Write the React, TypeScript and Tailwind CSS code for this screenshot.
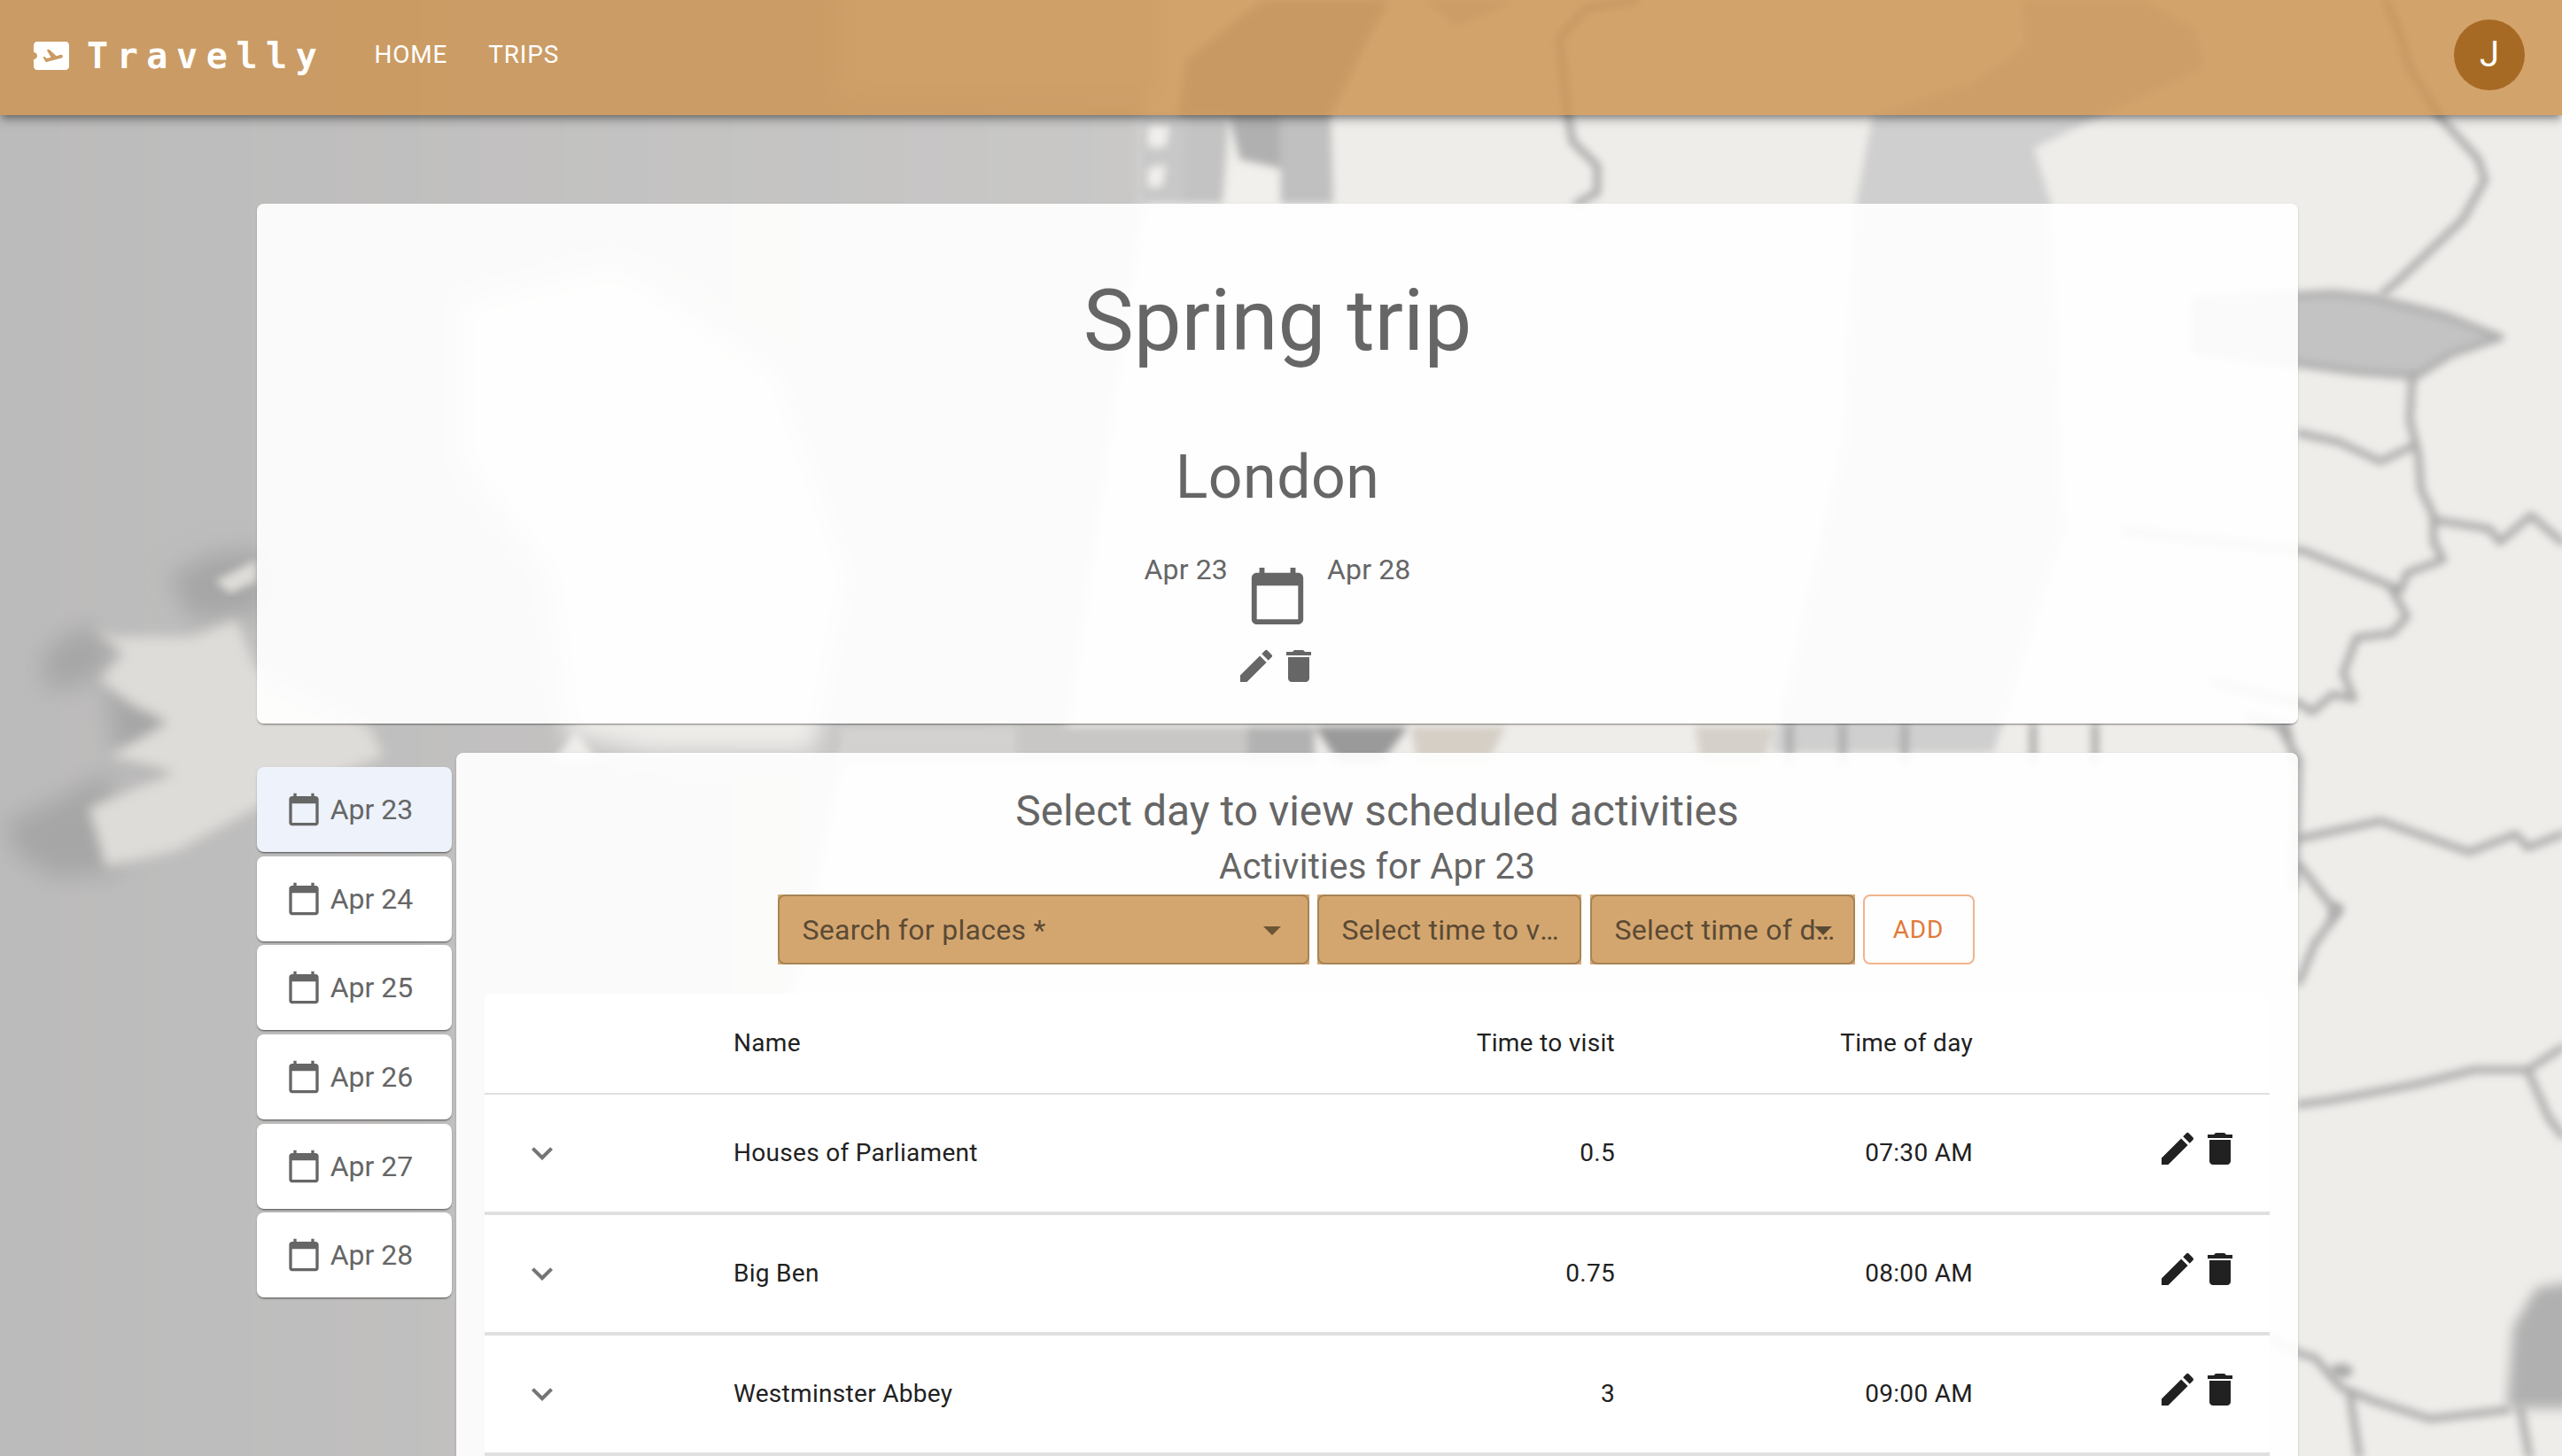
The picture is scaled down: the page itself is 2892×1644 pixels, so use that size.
import React from 'react';
import {
  MdAirplaneTicket,
  MdArrowDropDown,
  MdCalendarToday,
  MdDelete,
  MdEdit,
  MdKeyboardArrowDown,
} from 'react-icons/md';

const days = ['Apr 23', 'Apr 24', 'Apr 25', 'Apr 26', 'Apr 27', 'Apr 28'];

const activities = [
  { name: 'Houses of Parliament', visit: '0.5', time: '07:30 AM' },
  { name: 'Big Ben', visit: '0.75', time: '08:00 AM' },
  { name: 'Westminster Abbey', visit: '3', time: '09:00 AM' },
];

const borders = [
  'M2752 130 L2797 179 L2805 203 L2780 248 L2707 317 L2690 331',
  'M2723 425 L2720 474 L2730 514 L2733 553 L2747 582 L2747 612 L2758 632 L2717 647 L2710 666 L2600 622 L2400 600',
  'M2595 489 L2640 499 L2687 521 L2723 504',
  'M2747 587 L2810 597 L2822 612 L2857 582 L2892 612',
  'M2700 666 L2717 696 L2700 715 L2660 720 L2645 760 L2657 789 L2633 784 L2610 804 L2595 794 L2500 770',
  'M2540 810 L2572 819 L2595 858 L2590 1000',
  'M2595 947 L2687 927 L2787 962 L2840 942 L2853 957 L2892 942',
  'M2595 976 L2630 1021 L2642 1026 L2628 1045 L2613 1065 L2595 1109',
  'M2595 1247 L2633 1242 L2687 1232 L2733 1223 L2793 1208 L2853 1208 L2892 1183',
  'M2853 1208 L2877 1262 L2892 1282',
  'M2540 1500 L2595 1528 L2613 1533 L2643 1567 L2680 1582 L2743 1602 L2830 1592',
  'M2653 1577 L2663 1644',
  'M2845 1590 L2855 1644',
  'M2693 0 L2707 33 L2720 77 L2753 130',
  'M1846 0 L1790 10 L1760 43 L1770 130 L1775 160 L1803 187 L1803 217 L1780 230',
  'M2020 820 L2020 860',
  'M2080 820 L2080 860',
  'M2150 820 L2150 860',
  'M2295 820 L2295 860',
  'M2365 820 L2365 860',
  'M2580 815 L2590 860',
];

function MapBackground() {
  return (
    <svg
      className="absolute inset-0"
      width="2892"
      height="1644"
      viewBox="0 0 2892 1644"
      preserveAspectRatio="none"
    >
      <defs>
        <filter id="soft" x="-10%" y="-10%" width="120%" height="120%">
          <feGaussianBlur stdDeviation="5" />
        </filter>
        <filter id="mid" x="-10%" y="-10%" width="120%" height="120%">
          <feGaussianBlur stdDeviation="7" />
        </filter>
        <filter id="wide" x="-20%" y="-20%" width="140%" height="140%">
          <feGaussianBlur stdDeviation="14" />
        </filter>
        <linearGradient id="sea" x1="0" y1="0" x2="1" y2="0">
          <stop offset="0" stopColor="#bbbaba" />
          <stop offset="1" stopColor="#c9c8c7" />
        </linearGradient>
      </defs>
      <rect width="2892" height="1644" fill="#efedea" />
      {/* sea to the west */}
      <path
        d="M-40 -40 L1290 -40 L1290 230 L1250 500 L1200 850 L950 850 L900 1100 L600 1700 L-40 1700 Z"
        fill="url(#sea)"
        filter="url(#mid)"
      />
      {/* paler behind the bar so the coast fades out up there */}
      <rect x="950" y="-20" width="360" height="130" fill="#dcdad6" filter="url(#wide)" />
      {/* britain */}
      <path
        d="M520 340 L700 300 L880 420 L960 650 L920 850 L730 850 L640 830 L620 650 L520 520 Z"
        fill="#efedea"
        filter="url(#wide)"
      />
      <path d="M625 860 L650 825 L675 860 Z" fill="#efedea" filter="url(#soft)" />
      {/* ireland */}
      <g filter="url(#wide)" fill="#a6a6a6">
        <path d="M50 735 L95 705 L135 735 L100 770 L50 780 Z" />
        <path d="M5 930 L60 905 L125 870 L135 985 L60 990 L20 965 Z" />
        <path d="M190 650 L240 625 L300 620 L300 690 L215 700 Z" />
        <path d="M120 770 L195 800 L200 880 L130 850 Z" />
      </g>
      <path
        d="M107 709 L140 738 L113 767 L150 796 L190 815 L123 854 L197 873 L147 893 L100 912 L120 979 L200 960 L290 912 L333 893 L433 854 L417 820 L290 757 L267 700 L217 719 L133 719 Z"
        fill="#dedcd8"
        filter="url(#mid)"
      />
      <path d="M243 656 L290 632 L290 656 L260 670 Z" fill="#dedcd8" filter="url(#soft)" />
      {/* channel streaks near the top */}
      <g filter="url(#soft)">
        <path d="M1285 130 L1340 130 L1340 230 L1285 230 Z" fill="#c8c8c8" />
        <path d="M1296 142 L1320 142 L1316 166 L1296 166 Z" fill="#f2f0ed" />
        <path d="M1296 190 L1316 186 L1312 210 L1296 212 Z" fill="#f2f0ed" />
        <path d="M1340 130 L1387 130 L1380 230 L1335 230 Z" fill="#c3c3c3" />
        <path d="M1387 130 L1445 130 L1445 190 L1400 180 Z" fill="#b0b0b0" />
        <path d="M1390 185 L1445 195 L1445 230 L1385 230 Z" fill="#f2f0ed" />
        <path d="M1445 130 L1502 130 L1505 230 L1445 230 Z" fill="#c0c0c0" />
        <path d="M1425 0 L1339 67 L1330 130 L1502 130 L1550 33 L1569 0 Z" fill="#b4b4b4" />
        <path d="M1607 0 L1645 30 L1712 0 Z" fill="#c6c6c6" />
        <path d="M2282 0 L2287 50 L2229 93 L2114 130 L2095 230 L2080 500 L2000 850 L2250 850 L2330 600 L2315 230 L2296 167 L2373 130 L2488 77 L2478 33 L2420 0 Z" fill="#cfcfcf" />
        <path d="M948 820 L1147 820 L1147 860 L948 860 Z" fill="#d4d2d0" />
        <path d="M1147 820 L1408 820 L1408 860 L1147 860 Z" fill="#c9c7c5" />
        <path d="M1408 820 L1484 820 L1484 860 L1408 860 Z" fill="#b2b2b2" />
        <path d="M1484 820 L1590 820 L1560 860 L1510 860 Z" fill="#9a9a9a" />
        <path d="M1592 820 L1700 820 L1680 860 L1600 860 Z" fill="#d5cfc6" />
        <path d="M1913 820 L2005 820 L1990 860 L1920 860 Z" fill="#d5d0c9" />
      </g>
      {/* baltic and the blot in the corner */}
      <g filter="url(#soft)">
        <path
          d="M2480 340 L2633 331 L2680 336 L2760 356 L2823 381 L2767 400 L2727 425 L2660 420 L2480 395 Z"
          fill="#c3c3c3"
          stroke="#aeaeae"
          strokeWidth="8"
          strokeLinejoin="round"
        />
        <ellipse cx="2643" cy="1548" rx="13" ry="8" fill="#a9a9a9" />
        <path d="M2630 1021 L2642 1026 L2628 1045 Z" fill="#a9a9a9" />
      </g>
      <path
        d="M2830 1590 L2837 1498 L2863 1454 L2920 1445 L2920 1590 Z"
        fill="#b0b0b0"
        filter="url(#mid)"
      />
      <g filter="url(#soft)" fill="none" stroke="#a9a9a9" strokeWidth="8" strokeLinejoin="round" strokeLinecap="round">
        {borders.map((d, i) => (
          <path key={i} d={d} />
        ))}
      </g>
    </svg>
  );
}

function Header() {
  return (
    <header className="relative z-10 flex h-[130px] items-center bg-[#cd9452]/[0.83] pl-[34px] pr-[42px] text-white shadow-[0_4px_8px_-2px_rgba(0,0,0,0.4),0_8px_10px_0_rgba(0,0,0,0.14)]">
      <MdAirplaneTicket size={48} className="-mt-[5px] text-white" />
      <span className="-mt-[4px] ml-[16px] font-['DejaVu_Sans_Mono',monospace] text-[40px] leading-[48px] font-bold tracking-[9.6px]">
        Travelly
      </span>
      <nav className="ml-[55px] -mt-[6px] flex gap-[46px] text-[28px] leading-[40px] tracking-[0.8px]">
        <span>HOME</span>
        <span>TRIPS</span>
      </nav>
      <div className="ml-auto -mt-[6px] flex h-[80px] w-[80px] items-center justify-center rounded-full bg-[#a76a24] text-[40px]">
        J
      </div>
    </header>
  );
}

function TripCard() {
  return (
    <section className="flex h-[587px] flex-col items-center rounded-lg bg-white/[0.92] pt-[76px] text-[#666666] shadow-[0_2px_2px_-1px_rgba(0,0,0,0.4),0_1px_3px_0_rgba(0,0,0,0.12)]">
      <h1 className="text-[96px] leading-[112px]">Spring trip</h1>
      <h2 className="mt-[81px] text-[68px] leading-[80px] tracking-[0.00735em]">London</h2>
      <div className="mt-[40px] flex items-start tracking-[0.00938em]">
        <span className="text-[32px] leading-[48px]">Apr 23</span>
        <MdCalendarToday size={70} className="mx-[21px] mt-[19px]" />
        <span className="text-[32px] leading-[48px]">Apr 28</span>
      </div>
      <div className="mt-[20px] flex">
        <MdEdit size={48} />
        <MdDelete size={48} />
      </div>
    </section>
  );
}

function DayList() {
  return (
    <aside className="flex w-[220px] shrink-0 flex-col gap-[4.7px] pt-[16px]">
      {days.map((day, i) => (
        <button
          key={day}
          className={`flex h-[96px] items-center justify-center gap-[10px] rounded-lg pr-[11px] text-[32px] text-[#666666] shadow-[0_2px_2px_-1px_rgba(0,0,0,0.5),0_1px_3px_0_rgba(0,0,0,0.14)] ${
            i === 0 ? 'bg-[#edf2fb]' : 'bg-white'
          }`}
        >
          <MdCalendarToday size={40} />
          {day}
        </button>
      ))}
    </aside>
  );
}

function Controls() {
  return (
    <div className="mt-[7px] flex justify-center pr-[3px] text-[32px] tracking-[0.00938em] text-[#5a4a35]">
      <div className="h-[79px] w-[600px] bg-[#d4a66f]">
        <div className="relative flex h-full items-center rounded-lg border-2 border-[#a58455] pl-[26px]">
          Search for places *
          <MdArrowDropDown size={48} className="absolute right-[16px] top-[14px] text-[#6b5535]" />
        </div>
      </div>
      <div className="ml-[9px] h-[79px] w-[298px] bg-[#d4a66f]">
        <div className="flex h-full items-center rounded-lg border-2 border-[#a58455] pl-[26px] pr-[21px]">
          <span className="truncate">Select time to visit</span>
        </div>
      </div>
      <div className="ml-[10px] h-[79px] w-[299px] bg-[#d4a66f]">
        <div className="relative flex h-full items-center rounded-lg border-2 border-[#a58455] pl-[26px] pr-[10px]">
          <span className="truncate">Select time of day</span>
          <MdArrowDropDown size={48} className="absolute right-[10px] top-[14px] text-[#5a4a35]" />
        </div>
      </div>
      <button className="ml-[9px] h-[79px] w-[126px] rounded-lg border-2 border-[#f0b48c] text-[28px] tracking-[0.8px] text-[#e27a37]">
        ADD
      </button>
    </div>
  );
}

function ActivityTable() {
  const cols = 'grid grid-cols-[281px_620px_375px_404px_335px] items-center';
  return (
    <div className="mx-[32px] mt-[33px] rounded-lg bg-white text-[28px] tracking-[0.01071em] text-[#212121]">
      <div className={`${cols} h-[114px] border-b-2 border-[#e0e0e0]`}>
        <span />
        <span>Name</span>
        <span className="text-right">Time to visit</span>
        <span className="text-right">Time of day</span>
        <span />
      </div>
      {activities.map((row) => (
        <div key={row.name} className={`${cols} h-[136px] border-b-4 border-[#e0e0e0]`}>
          <span className="pl-[41px] text-[#757575]">
            <MdKeyboardArrowDown size={48} />
          </span>
          <span>{row.name}</span>
          <span className="text-right">{row.visit}</span>
          <span className="text-right">{row.time}</span>
          <span className="mb-[10px] flex pl-[207px]">
            <MdEdit size={48} />
            <MdDelete size={48} />
          </span>
        </div>
      ))}
    </div>
  );
}

export default function App() {
  return (
    <div className="relative h-[1644px] overflow-hidden font-['Roboto',sans-serif]">
      <MapBackground />
      <Header />
      <main className="relative ml-[290px] w-[2304px] pt-[100px]">
        <TripCard />
        <div className="mt-[33px] flex items-start gap-[5px]">
          <DayList />
          <section className="min-w-0 flex-1 rounded-lg bg-white/[0.92] pt-[38px] pb-[40px] text-center text-[#666666] shadow-[0_1px_3px_0_rgba(0,0,0,0.2)]">
            <h3 className="text-[48px] leading-[56px]">Select day to view scheduled activities</h3>
            <h4 className="mt-[11px] text-[40px] leading-[48px] tracking-[0.0075em]">Activities for Apr 23</h4>
            <Controls />
            <div className="text-left">
              <ActivityTable />
            </div>
          </section>
        </div>
      </main>
    </div>
  );
}
